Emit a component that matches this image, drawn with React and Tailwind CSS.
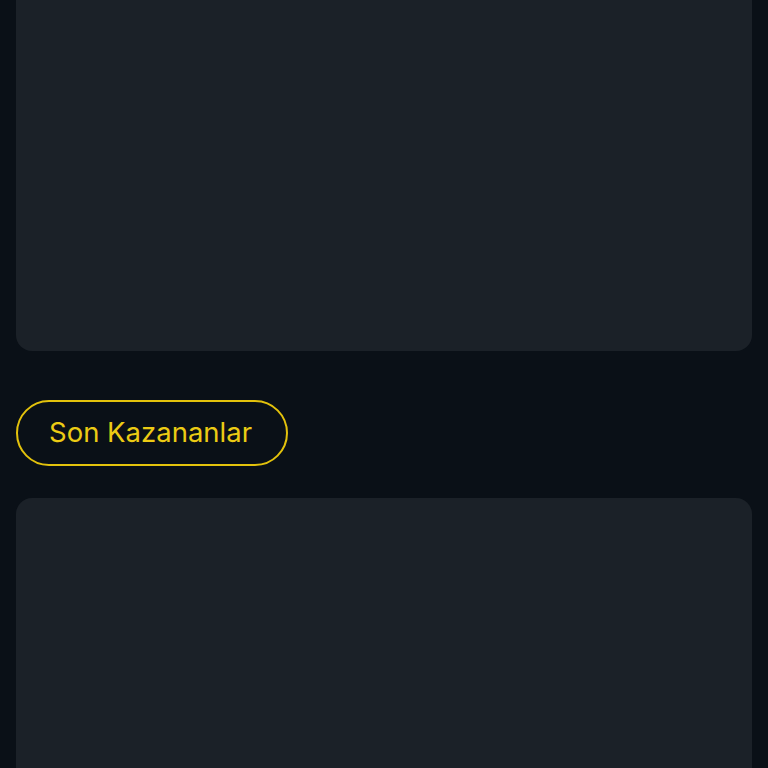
import React from 'react';

const App = () => {
  return (
    <div className="min-h-screen h-[768px] overflow-hidden bg-[#0a1017] px-4" style={{ fontFamily: 'Inter, "Noto Sans", sans-serif' }}>
      {/* Top card (continues above viewport) */}
      <div className="-mt-4 h-[367px] rounded-2xl bg-[#1b2128]" />

      {/* Section heading pill */}
      <div className="mt-[49px] flex">
        <button className="h-[66px] w-[272px] rounded-full border-2 border-[#e3c20c] pl-[31px] text-left text-[27.5px] leading-none font-normal text-[#eccb14]">
          Son Kazananlar
        </button>
      </div>

      {/* Second card */}
      <div className="mt-8 h-[400px] rounded-2xl bg-[#1b2128]" />
    </div>
  );
};

export default App;
